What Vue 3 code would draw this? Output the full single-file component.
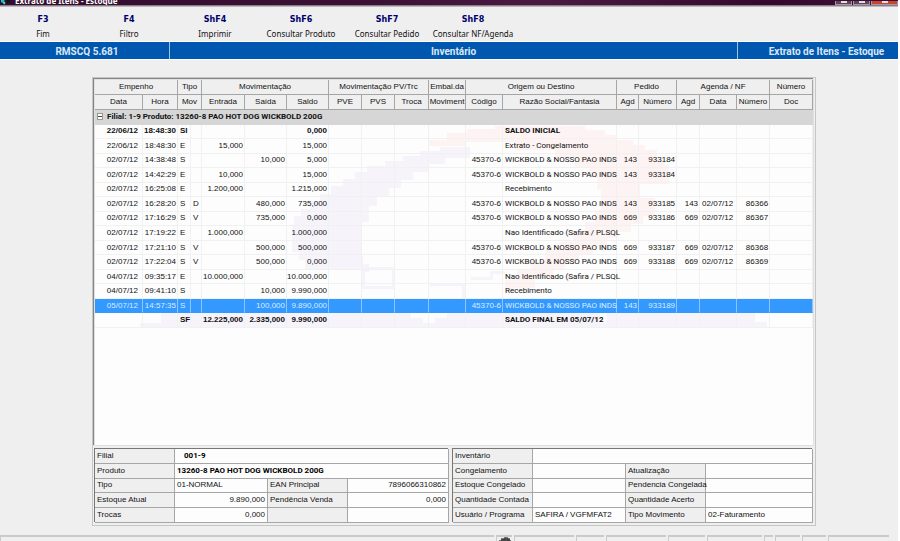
<script setup>
import { ref } from 'vue'

const title = 'Extrato de Itens - Estoque'

const actions = [
  { key: 'F3', label: 'Fim' },
  { key: 'F4', label: 'Filtro' },
  { key: 'ShF4', label: 'Imprimir' },
  { key: 'ShF6', label: 'Consultar Produto' },
  { key: 'ShF7', label: 'Consultar Pedido' },
  { key: 'ShF8', label: 'Consultar NF/Agenda' },
]

const columns = [48, 35, 13, 11, 43, 42, 42, 33, 33, 34, 37, 37, 114, 22, 38, 23, 37, 33, 43]

const groups = [
  { text: 'Empenho', span: 2 },
  { text: 'Tipo', span: 2 },
  { text: 'Movimentação', span: 3 },
  { text: 'Movimentação PV/Trc', span: 3 },
  { text: 'Embal.da', span: 1 },
  { text: 'Origem ou Destino', span: 2 },
  { text: 'Pedido', span: 2 },
  { text: 'Agenda / NF', span: 3 },
  { text: 'Número', span: 1 },
]

const heads = [
  { text: 'Data', span: 1 },
  { text: 'Hora', span: 1 },
  { text: 'Mov', span: 2 },
  { text: 'Entrada', span: 1 },
  { text: 'Saída', span: 1 },
  { text: 'Saldo', span: 1 },
  { text: 'PVE', span: 1 },
  { text: 'PVS', span: 1 },
  { text: 'Troca', span: 1 },
  { text: 'Moviment', span: 1 },
  { text: 'Código', span: 1 },
  { text: 'Razão Social/Fantasia', span: 1 },
  { text: 'Agd', span: 1 },
  { text: 'Número', span: 1 },
  { text: 'Agd', span: 1 },
  { text: 'Data', span: 1 },
  { text: 'Número', span: 1 },
  { text: 'Doc', span: 1 },
]

const wick = 'WICKBOLD & NOSSO PAO INDS'
const nao = 'Nao Identificado (Safira / PLSQL'

// date, time, type, sub-type, in, out, balance, code, name, order agd, order no, nf agd, nf date, nf no
const data = [
  ['22/06/12', '18:48:30', 'SI', '', '', '', '0,000', '', 'SALDO INICIAL', '', '', '', '', ''],
  ['22/06/12', '18:48:30', 'E', '', '15,000', '', '15,000', '', 'Extrato - Congelamento', '', '', '', '', ''],
  ['02/07/12', '14:38:48', 'S', '', '', '10,000', '5,000', '45370-6', wick, '143', '933184', '', '', ''],
  ['02/07/12', '14:42:29', 'E', '', '10,000', '', '15,000', '45370-6', wick, '143', '933184', '', '', ''],
  ['02/07/12', '16:25:08', 'E', '', '1.200,000', '', '1.215,000', '', 'Recebimento', '', '', '', '', ''],
  ['02/07/12', '16:28:20', 'S', 'D', '', '480,000', '735,000', '45370-6', wick, '143', '933185', '143', '02/07/12', '86366'],
  ['02/07/12', '17:16:29', 'S', 'V', '', '735,000', '0,000', '45370-6', wick, '669', '933186', '669', '02/07/12', '86367'],
  ['02/07/12', '17:19:22', 'E', '', '1.000,000', '', '1.000,000', '', nao, '', '', '', '', ''],
  ['02/07/12', '17:21:10', 'S', 'V', '', '500,000', '500,000', '45370-6', wick, '669', '933187', '669', '02/07/12', '86368'],
  ['02/07/12', '17:22:04', 'S', 'V', '', '500,000', '0,000', '45370-6', wick, '669', '933188', '669', '02/07/12', '86369'],
  ['04/07/12', '09:35:17', 'E', '', '10.000,000', '', '10.000,000', '', nao, '', '', '', '', ''],
  ['04/07/12', '09:41:10', 'S', '', '', '10,000', '9.990,000', '', 'Recebimento', '', '', '', '', ''],
  ['05/07/12', '14:57:35', 'S', '', '', '100,000', '9.890,000', '45370-6', wick, '143', '933189', '', '', ''],
  ['', '', 'SF', '', '12.225,000', '2.335,000', '9.990,000', '', 'SALDO FINAL EM 05/07/12', '', '', '', '', ''],
]

const rows = data.map((r, i) => ({
  cells: [...r.slice(0, 7), '', '', '', '', ...r.slice(7), ''],
  bold: i === 0 || i === 13,
}))

const leftAligned = [2, 3, 12, 16]
const selected = ref(12)
const open = ref(true)

const statusPanels = [60, 28, 60, 37, 55, 9, 25, 24, 61]
</script>

<template>
  <div class="window">
    <header class="titlebar">
      <svg class="app-icon" viewBox="0 0 12 6" aria-hidden="true">
        <path d="M0 0h4v2H2v1H0z" fill="#19c8c4" />
        <path d="M2 2h3v3H3V4H2z" fill="#2ee0d2" />
        <path d="M7 0h4v2H9v2H7z" fill="#111" />
      </svg>
      <span class="title">{{ title }}</span>
      <span class="controls">
        <button type="button" aria-label="Minimizar" class="ctl"><i></i></button>
        <button type="button" aria-label="Maximizar" class="ctl"><i></i></button>
        <button type="button" aria-label="Fechar" class="ctl close"><i></i></button>
      </span>
    </header>

    <nav class="toolbar">
      <button v-for="a in actions" :key="a.key" type="button" class="action">
        <b>{{ a.key }}</b>
        <span>{{ a.label }}</span>
      </button>
    </nav>

    <div class="banner">
      <span>RMSCQ 5.681</span>
      <span>Inventário</span>
      <span>{{ title }}</span>
    </div>

    <main class="panel">
      <section class="sheet">
        <svg class="watermark" viewBox="0 0 718 365" preserveAspectRatio="none" shape-rendering="crispEdges" aria-hidden="true">
          <path fill="#f6f4fa" d="M375 67H345V71H325V76H308V81H290V86H272V92H260V99H248V106H236V114H225V121H215V129H206V136H199V144H197V172H204V180H210V190H266V192H274V184H268V176H266V142H274V126H282V116H294V108H306V100H318V92H334V84H350V78H375Z" />
          <path fill="#fef3f3" d="M333 66V60H352V53H372V49H400V46H490V50H510V55H522V60H538V65H550V70H562V80H570V86H574V104H545V118H560V136H548V144H536V152H524V158H512V166H498V174H484V182H470V190H458V198H440V208H420V212H410V200H422V190H436V180H450V170H464V162H478V152H490V142H500V130H506V110H502V98H494V88H480V78H460V70H420V62H370V66Z" />
          <path fill="#f6f4fa" d="M66 233H316V238H328V243H340V238H352V233H505V243H512V233H660V242H672V248H45V243H66Z" />
          <path fill="none" stroke="#f6f4fa" stroke-width="3" d="M268 207V188H298V207ZM336 207V204H368V218M376 198H396V192H410" />
        </svg>
        <table class="grid">
          <colgroup>
            <col v-for="(w, i) in columns" :key="i" :style="{ width: w + 'px' }" />
          </colgroup>
          <thead>
            <tr>
              <th v-for="(g, i) in groups" :key="i" :colspan="g.span" scope="colgroup">{{ g.text }}</th>
            </tr>
            <tr>
              <th v-for="(h, i) in heads" :key="i" :colspan="h.span" scope="col">{{ h.text }}</th>
            </tr>
          </thead>
          <tbody>
            <tr class="group">
              <td colspan="19">
                <div class="group-line">
                  <button type="button" class="toggle" :aria-expanded="open" aria-label="Recolher grupo" @click="open = !open">
                    <i></i>
                  </button>
                  <span>Filial: 1-9 Produto: 13260-8 PAO HOT DOG WICKBOLD 200G</span>
                </div>
              </td>
            </tr>
            <tr
              v-for="(r, i) in open ? rows : []"
              :key="i"
              :class="{ bold: r.bold, selected: selected === i }"
              @click="selected = i"
            >
              <td
                v-for="(c, j) in r.cells"
                :key="j"
                :class="{ left: leftAligned.includes(j), date: j === 0, name: j === 12 }"
              >{{ c }}</td>
            </tr>
          </tbody>
        </table>
      </section>

      <div class="details">
        <table class="form product">
          <colgroup><col class="c-label" /><col class="c-value" /><col class="c-label" /><col class="c-rest" /></colgroup>
          <tbody>
            <tr><th scope="row">Filial</th><td colspan="3" class="strong indent">001-9</td></tr>
            <tr><th scope="row">Produto</th><td colspan="3" class="strong">13260-8 PAO HOT DOG WICKBOLD 200G</td></tr>
            <tr><th scope="row">Tipo</th><td>01-NORMAL</td><th scope="row">EAN Principal</th><td class="num">7896066310862</td></tr>
            <tr><th scope="row">Estoque Atual</th><td class="num">9.890,000</td><th scope="row">Pendência Venda</th><td class="num">0,000</td></tr>
            <tr><th scope="row">Trocas</th><td class="num">0,000</td><th></th><td></td></tr>
          </tbody>
        </table>
        <table class="form inventory">
          <colgroup><col class="c-label" /><col class="c-value" /><col class="c-label" /><col class="c-rest" /></colgroup>
          <tbody>
            <tr><th scope="row">Inventário</th><td colspan="3"></td></tr>
            <tr><th scope="row">Congelamento</th><td></td><th scope="row">Atualização</th><td></td></tr>
            <tr><th scope="row">Estoque Congelado</th><td></td><th scope="row">Pendencia Congelada</th><td></td></tr>
            <tr><th scope="row">Quantidade Contada</th><td></td><th scope="row">Quantidade Acerto</th><td></td></tr>
            <tr><th scope="row">Usuário / Programa</th><td>SAFIRA / VGFMFAT2</td><th scope="row">Tipo Movimento</th><td>02-Faturamento</td></tr>
          </tbody>
        </table>
      </div>
    </main>

    <footer class="status">
      <span class="slot main-slot"></span>
      <span class="slot icon-slot">
        <svg viewBox="0 0 14 5" aria-hidden="true">
          <path d="M1 5V3h2V1h3V0h4v1h2v2h1v2z" fill="#777" />
          <path d="M3 3h3V2h4v1h2M2 5h4V4h5" fill="none" stroke="#222" />
        </svg>
      </span>
      <span v-for="(w, i) in statusPanels" :key="i" class="slot" :style="{ width: w + 'px' }"></span>
    </footer>
  </div>
</template>

<style>
body {
  background: #fff;
}
</style>

<style scoped>
.window {
  box-sizing: border-box;
  min-height: 100vh;
  display: flex;
  flex-direction: column;
  margin-right: 2px;
  background: #efefef;
  color: #111;
  font-family: "Liberation Sans", Arial, sans-serif;
  font-size: 8px;
  line-height: 12px;
  overflow: hidden;
}

button {
  font: inherit;
  color: inherit;
  border: 0;
  padding: 0;
  margin: 0;
  background: none;
}

.titlebar {
  height: 5px;
  display: flex;
  align-items: flex-end;
  gap: 3px;
  overflow: hidden;
  background: linear-gradient(90deg, #330c2e, #3b1034 40%, #4b1a43 60%, #35092f 85%, #3d1136);
  border-bottom: 1px solid #8a7d88;
  box-shadow: 0 1px 0 #bdb8bc;
}

.app-icon {
  width: 12px;
  height: 5px;
  flex: none;
}

.title {
  flex: 1;
  color: #fff;
  font: bold 8px/8px "Noto Sans", sans-serif;
  white-space: nowrap;
}

.controls {
  display: flex;
  gap: 1px;
}

.ctl {
  width: 17px;
  height: 4px;
  display: flex;
  justify-content: center;
  background: #5d4459;
  border: 1px solid #a894a5;
  border-top: 0;
}

.ctl i {
  width: 6px;
  height: 2px;
  background: #e4dce3;
}

.ctl.close {
  width: 27px;
  background: #c8442f;
}

.toolbar {
  display: flex;
  padding: 8px 0 1px;
}

.action {
  width: 86px;
  display: flex;
  flex-direction: column;
  align-items: center;
  gap: 1px;
  white-space: nowrap;
  font: 8px/13px "Noto Sans", "Open Sans", sans-serif;
}

.action b {
  color: #00006c;
  font: bold 8px/12px "DejaVu Sans", sans-serif;
}

.banner {
  display: grid;
  grid-template-columns: 169px 1fr 161px;
  height: 17px;
  border-top: 1px solid #fff;
  border-bottom: 1px solid #fff;
  background: #0057b0;
  color: #dce8f4;
  font: bold 10px/19px Roboto, "Liberation Sans", sans-serif;
  text-align: center;
  white-space: nowrap;
}

.banner span {
  height: 17px;
}

.banner span + span {
  border-left: 1px solid #9cc4ea;
}

.banner span:first-child {
  padding-left: 5px;
}

.banner span:last-child {
  padding-left: 17px;
}

.panel {
  margin: 17px 82px 8px 92px;
  padding: 2px;
  border: 1px solid #c6c6c6;
  display: flex;
  flex-direction: column;
  gap: 4px;
}

.sheet {
  position: relative;
  min-height: 365px;
  background: #fdfdfd;
  box-shadow: 0 0 0 1px #e0e0e0, -1px -1px 0 1px #858585;
}

.watermark {
  position: absolute;
  inset: 0;
  width: 100%;
  height: 365px;
}

table {
  border-collapse: separate;
  border-spacing: 0;
  table-layout: fixed;
  width: 100%;
}

.grid {
  position: relative;
  height: 248px;
}

th,
td {
  padding: 0;
  white-space: nowrap;
  font-weight: normal;
}

.grid th {
  box-sizing: border-box;
  height: 15px;
  background: #efefef;
  border-right: 1px solid #a6a6a6;
  border-bottom: 1px solid #a6a6a6;
  text-align: center;
}

.grid td {
  padding: 0 1px 0 0;
  border-right: 1px solid #f1f1f1;
  border-bottom: 1px solid #f1f1f1;
  text-align: right;
}

.grid td.left {
  padding: 0 0 0 2px;
  text-align: left;
}

.grid td.date {
  padding-right: 4px;
}

.grid td.name {
  font-family: Roboto, "Liberation Sans", sans-serif;
}

.grid .group td {
  padding-left: 2px;
  background: #d6d6d6;
  border-color: #d6d6d6;
  font-family: Roboto, "Liberation Sans", sans-serif;
  font-weight: bold;
  text-align: left;
}

.group-line {
  display: flex;
  align-items: center;
  gap: 4px;
}

.toggle {
  width: 6px;
  height: 7px;
  display: flex;
  align-items: center;
  justify-content: center;
  background: #fff;
  border: 1px solid #999;
}

.toggle i {
  width: 4px;
  height: 1px;
  background: #444;
}

.bold td {
  font-weight: bold;
}

.selected td {
  background: #3399ff;
  color: #d9ecff;
  border-right-color: #8cc6ff;
  border-bottom-color: #3399ff;
}

.details {
  display: grid;
  grid-template-columns: 354fr 360fr;
  gap: 4px;
}

.form {
  height: 74px;
  background: #fdfdfd;
  box-shadow: -1px -1px 0 0 #777;
}

.c-label {
  width: 80px;
}

.c-value {
  width: 93px;
}

.form th,
.form td {
  padding: 0 2px;
  border-right: 1px solid #a6a6a6;
  border-bottom: 1px solid #a6a6a6;
  text-align: left;
}

.form th {
  background: #efefef;
}

.form .num {
  text-align: right;
}

.form .strong {
  font-family: Roboto, "Liberation Sans", sans-serif;
  font-weight: bold;
  color: #000;
}

.form .indent {
  padding-left: 9px;
}

.status {
  display: flex;
  gap: 2px;
  margin-top: auto;
  padding-right: 9px;
}

.slot {
  box-sizing: border-box;
  height: 6px;
  border-top: 2px solid #cacaca;
  border-left: 1px solid #cacaca;
}

.main-slot {
  flex: 1;
}

.icon-slot {
  width: 16px;
  display: flex;
  justify-content: center;
}

.icon-slot svg {
  width: 14px;
  height: 5px;
}
</style>
